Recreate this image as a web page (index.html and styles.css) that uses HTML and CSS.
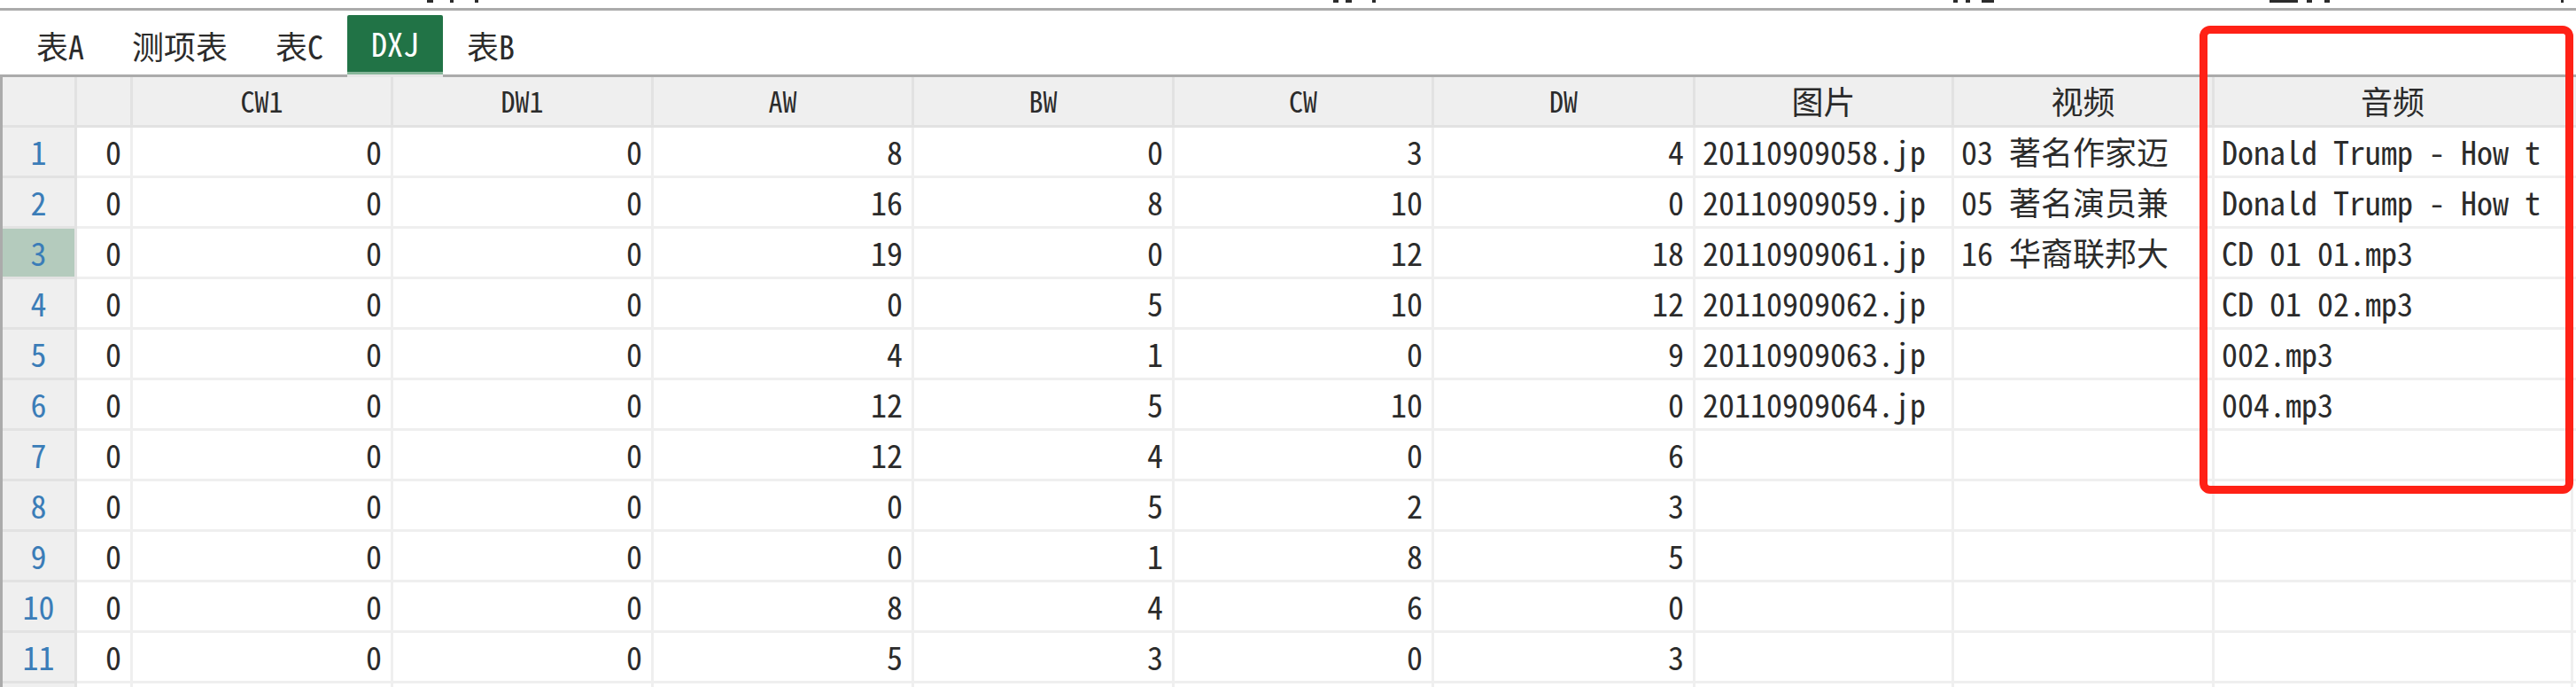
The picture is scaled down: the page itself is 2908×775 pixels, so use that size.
FILE: index.html
```html
<!DOCTYPE html>
<html lang="zh-CN">
  <head>
    <meta charset="UTF-8" />
    <title>DXJ</title>
    <link rel="stylesheet" href="styles.css">
  </head>
  <body>
    <!-- 上のツールバー（はみ出した部分だけ見える） -->
    <div class="topbar" id="topbar"></div>

    <div class="tabs">
      <div class="tab">表A</div>
      <div class="tab">测项表</div>
      <div class="tab">表C</div>
      <div class="tab active">DXJ</div>
      <div class="tab">表B</div>
    </div>

    <div class="sheet" id="sheet">
      <div class="row head">
        <div class="cell corner"></div>
        <div class="cell"></div>
        <div class="cell">CW1</div>
        <div class="cell">DW1</div>
        <div class="cell">AW</div>
        <div class="cell">BW</div>
        <div class="cell">CW</div>
        <div class="cell">DW</div>
        <div class="cell cjk">图片</div>
        <div class="cell cjk">视频</div>
        <div class="cell cjk">音频</div>
        <div class="cell"></div>
      </div>
    </div>

    <!-- 标注框 -->
    <div class="mark"></div>

    <script>
      // [左の間隔, 幅]
      const bits = [
        [482, 7], [19, 4], [24, 4],
        [965, 6], [8, 7], [23, 4],
        [652, 5], [9, 5], [13, 14],
        [311, 32], [10, 6], [14, 6],
        [261, 3],
      ];
      const topbar = document.getElementById("topbar");
      bits.forEach(([gap, w]) => {
        const b = document.createElement("i");
        b.className = "bit";
        b.style.marginLeft = gap + "px";
        b.style.width = w + "px";
        topbar.appendChild(b);
      });

      const rows = [
        [0, 0, 0, 8, 0, 3, 4, "20110909058.jp", "03 著名作家迈", "Donald Trump - How t"],
        [0, 0, 0, 16, 8, 10, 0, "20110909059.jp", "05 著名演员兼", "Donald Trump - How t"],
        [0, 0, 0, 19, 0, 12, 18, "20110909061.jp", "16 华裔联邦大", "CD 01 01.mp3"],
        [0, 0, 0, 0, 5, 10, 12, "20110909062.jp", "", "CD 01 02.mp3"],
        [0, 0, 0, 4, 1, 0, 9, "20110909063.jp", "", "002.mp3"],
        [0, 0, 0, 12, 5, 10, 0, "20110909064.jp", "", "004.mp3"],
        [0, 0, 0, 12, 4, 0, 6, "", "", ""],
        [0, 0, 0, 0, 5, 2, 3, "", "", ""],
        [0, 0, 0, 0, 1, 8, 5, "", "", ""],
        [0, 0, 0, 8, 4, 6, 0, "", "", ""],
        [0, 0, 0, 5, 3, 0, 3, "", "", ""],
        ["", "", "", "", "", "", "", "", "", ""],
      ];

      const sheet = document.getElementById("sheet");
      rows.forEach((r, i) => {
        const row = document.createElement("div");
        row.className = "row";
        let html = `<div class="cell num${i === 2 ? " current" : ""}">${i < 11 ? i + 1 : ""}</div>`;
        r.forEach((v, j) => {
          // 数字は右寄せ、文字列は左寄せ
          const cls = j < 7 ? "cell val" : "cell text";
          html += `<div class="${cls}">${v}</div>`;
        });
        html += `<div class="cell"></div>`;
        row.innerHTML = html;
        sheet.appendChild(row);
      });
    </script>
  </body>
</html>
```

FILE: styles.css
```css
body {
  margin: 0;
  background: #ffffff;
  color: #2b2b2b;
  font-family: "Noto Sans Mono CJK SC", "Noto Sans CJK SC", "Liberation Mono", monospace;
  overflow: hidden;
}
.topbar {
  display: flex;
  align-items: flex-start;
  height: 9px;
  border-bottom: 3px solid #ababab;
}
.bit {
  display: block;
  height: 3px;
  background: #2b2b2b;
}
.tabs {
  display: flex;
  align-items: flex-end;
  height: 72px;
  padding-left: 14px;
  border-bottom: 3px solid #ababab;
}
.tab {
  height: 64px;
  padding: 0 27px;
  font-size: 36px;
  line-height: 62px;
  white-space: nowrap;
}
.tab.active {
  position: relative;
  background: #217346;
  color: #ffffff;
  border-bottom: 3px solid #86b699; /* 下の薄い緑 */
  border-radius: 2px 2px 0 0;
  box-shadow: 0 3px 0 #e6e6e6;
}
.sheet {
  border-left: 3px solid #ababab;
}
.row {
  display: grid;
  grid-template-columns: 84px 63px 294px 294px 294px 294px 293px 295px 292px 294px 405px 1fr;
  height: 57px;
}
.cell {
  box-sizing: border-box;
  border-right: 3px solid #efefef;
  border-bottom: 3px solid #efefef;
  padding: 0 10px;
  font-size: 36px;
  line-height: 52px;
  white-space: nowrap;
  overflow: hidden;
}
.head .cell {
  background: #efefef;
  border-color: #e2e2e2;
  text-align: center;
  font-size: 32px;
}
.head .cell.cjk {
  font-size: 36px;
}
.cell.num {
  background: #efefef;
  border-color: #e2e2e2;
  color: #3b7db8;
  text-align: center;
  padding: 0;
}
.cell.num.current {
  background: #b4cbbd;
}
.cell.val {
  text-align: right;
}
.cell.text {
  padding-left: 8px;
  padding-right: 0;
}
.mark {
  position: absolute;
  left: 2483px;
  top: 29px;
  width: 422px;
  height: 528px;
  box-sizing: border-box;
  border: 9px solid #ff2116;
  border-radius: 12px;
}
```
